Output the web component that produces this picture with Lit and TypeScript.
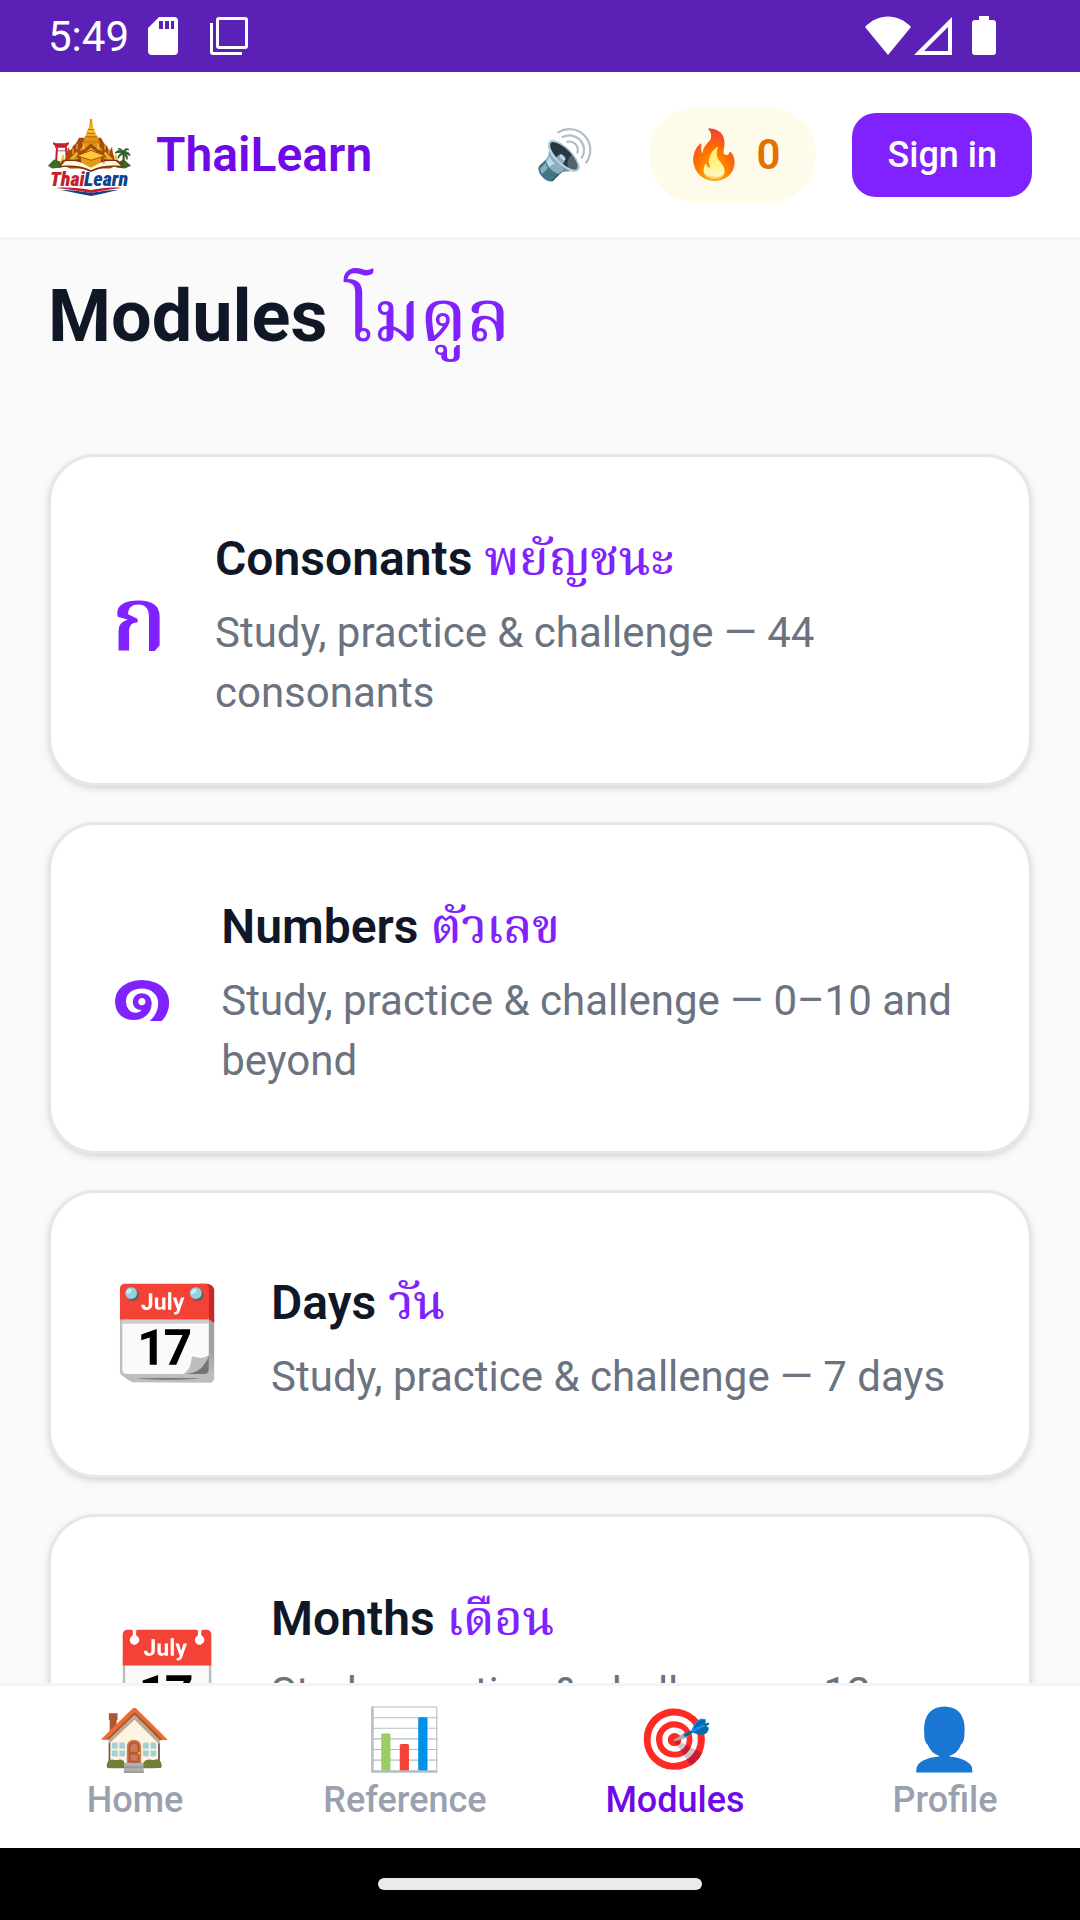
import { LitElement, html, css, svg, nothing } from "lit";
import { customElement } from "lit/decorators.js";
import { classMap } from "lit/directives/class-map.js";

interface Module {
  icon: string;
  digit?: boolean;
  title: string;
  thai: string;
  detail: string;
}

const MODULES: Module[] = [
  { icon: "ก", title: "Consonants", thai: "พยัญชนะ", detail: "Study, practice & challenge — 44 consonants" },
  { icon: "๑", digit: true, title: "Numbers", thai: "ตัวเลข", detail: "Study, practice & challenge — 0–10 and beyond" },
  { icon: "📆", title: "Days", thai: "วัน", detail: "Study, practice & challenge — 7 days" },
  { icon: "📅", title: "Months", thai: "เดือน", detail: "Study, practice & challenge — 12 months" },
];

const TABS = [
  { icon: "🏠", label: "Home" },
  { icon: "📊", label: "Reference" },
  { icon: "🎯", label: "Modules" },
  { icon: "👤", label: "Profile" },
];

const logo = svg`
  <svg class="logo" viewBox="0 0 84 84" role="img" aria-label="ThaiLearn logo">
    <defs>
      <linearGradient id="gold" x1="0" y1="0" x2="0" y2="1">
        <stop offset="0" stop-color="#d98a10" />
        <stop offset="0.5" stop-color="#ffc933" />
        <stop offset="1" stop-color="#d27a08" />
      </linearGradient>
    </defs>
    <g transform="translate(0 5) scale(1 0.9)">
      <path d="M5 27l3 1h9l4-1v2l-2 2v2H7v-2l-2-2z" fill="#c4202b" />
      <path d="M8 33h2l-1 17H7zM17 33h2l1 17h-2zM9 36h9v1H9z" fill="#c4202b" />
      <path d="M0 53l6-7 6 2 2 7-10 1zM83 53l-7-7-6 3-2 6 9 1z" fill="#3c6b25" />
      <path d="M73 51c2-5 2-8 1-13l2-1c1 5 1 9 0 14z" fill="#5e4a1e" />
      <path d="M75 38c-3-3-6-2-8 1 3-1 5-1 7 0-3 1-4 4-4 6 2-3 3-4 5-5 2 1 3 3 4 6 1-3 0-5-2-6 2 0 4 1 5 2 0-3-3-5-5-4 0-2 2-3 4-3-3-2-5 0-6 2-1-2-2-3-5-3 2 1 4 2 5 4z" fill="#28622c" stroke="#28622c" stroke-width="1" />
      <path d="M14 52c4-4 3-10 5-12l1-8 2 4 2-2 1-3 3-3 3-6h22l3 6 3 3 1 3 2 2 2-4 1 8c2 2 1 8 5 12l-8 4H22z" fill="#a84a0a" />
      <path d="M31 37l5-8 2-6h10l2 6 5 8-5-2-7-7-7 7z" fill="#e19a18" />
      <path d="M21 46l8-9 1 3-5 8zM65 46l-8-9-1 3 5 8zM33 42l10-9 10 9-4-1-6-5-6 5z" fill="#f0b12a" />
      <path d="M25 34v6M61 34v6M29 29v6M57 29v6M35 27l1 8M51 27l-1 8M30 44l-7 5M56 44l7 5" stroke="#ffd35a" stroke-width="1" />
      <path d="M42 1h2l1 9 2 4 1 4 2 3 1 5-3 2H38l-3-2 2-5 1-3 1-4 2-4z" fill="url(#gold)" />
      <path d="M40 13h6M39 17h8M37 21h12" stroke="#a95b08" stroke-width="1" />
      <path d="M12 50l3-10 3 10zM65 50l3-10 3 10z" fill="url(#gold)" />
      <path d="M10 55l5-8c10-2 20-1 28 6 8-7 18-8 27-6l6 8c-13-2-22 0-33 5-11-5-20-7-33-5z" fill="#7a3608" />
      <path d="M13 53l4-5c9-1 18 0 26 7 8-7 17-8 25-7l5 5c-12-1-21 0-30 5-9-5-18-6-30-5z" fill="#fff6df" />
      <path d="M33 43l10 3 10-3v6c-3 3-7 4-10 6-4-2-7-3-10-6z" fill="#e69a14" />
      <path d="M29 42l14-6 14 6-14 5z" fill="#ffc93c" stroke="#9c5209" stroke-width="1" />
      <path d="M55 43l1 8" stroke="#b56a0a" stroke-width="1" />
    </g>
    <text x="2" y="73" class="logo-text logo-red">Thai</text>
    <text x="36" y="73" class="logo-text logo-blue">Learn</text>
    <path d="M8 75c12-1 24 0 35 2 11-2 19-3 31-2-12 1-20 3-31 5-11-2-23-4-35-5z" fill="#c4202b" />
    <path d="M13 77c11 0 19 1 30 3 11-2 18-3 27-3-9 2-16 4-27 6-11-2-20-4-30-6z" fill="#123f86" />
  </svg>`;

@customElement("app-root")
export class AppRoot extends LitElement {
  static styles = css`
    :host {
      display: flex;
      flex-direction: column;
      height: 100vh;
      overflow: hidden;
      background: #fafafa;
      color: #101828;
      font-family: Roboto, "Noto Serif Thai", "Noto Color Emoji", sans-serif;
    }
    * { box-sizing: border-box; }
    a { color: inherit; text-decoration: none; }
    button { border: 0; font: inherit; cursor: pointer; }

    .status {
      display: flex;
      flex: none;
      align-items: center;
      height: 72px;
      padding: 0 78px 0 48px;
      background: #5b21b6;
      color: #fff;
      font-size: 42px;
    }
    .status svg { display: block; height: 40px; fill: currentColor; }
    .time { margin-right: 19px; }
    .sd { width: 30px; }
    .layers { width: 38px; margin-left: 32px; }
    .wifi { width: 46px; margin-left: auto; }
    .cell { width: 38px; margin-left: 3px; }
    .battery { width: 24px; margin: 0 6px 0 20px; }

    .header {
      display: flex;
      flex: none;
      align-items: center;
      gap: 36px;
      height: 168px;
      padding: 0 48px;
      background: #fff;
      border-bottom: 3px solid #f3f4f6;
    }
    .brand {
      display: flex;
      align-items: center;
      gap: 24px;
      margin-right: auto;
      color: #7008e7;
      font-size: 48px;
      font-weight: 600;
    }
    .logo { display: block; width: 84px; height: 84px; }
    .logo-text { font: italic 900 20px "Roboto Condensed", "Liberation Sans Narrow", "Noto Sans", sans-serif; }
    .logo-red { fill: #c4202b; }
    .logo-blue { fill: #0d4390; }
    .sound { padding: 0 18px; background: none; font-size: 48px; line-height: 60px; }
    .streak {
      display: flex;
      align-items: center;
      justify-content: center;
      gap: 12px;
      height: 96px;
      padding: 0 36px;
      border-radius: 48px;
      background: #fffbeb;
      color: #e17100;
      font-size: 42px;
      font-weight: 600;
    }
    .flame { font-size: 48px; line-height: 60px; }
    .signin {
      height: 84px;
      padding: 0 35px;
      border-radius: 24px;
      background: #7f22fe;
      color: #fff;
      font-size: 36px;
      font-weight: 500;
    }

    .content {
      flex: 1;
      min-height: 0;
      overflow: hidden;
      padding: 27px 48px 0;
    }
    h1 { margin: 0 0 87px; font-size: 72px; line-height: 100px; font-weight: 700; }
    .thai { color: #7f22fe; font-family: "Noto Serif Thai", serif; line-height: 1; }
    h1 .thai { font-weight: 500; }
    .list {
      display: flex;
      flex-direction: column;
      gap: 36px;
      margin: 0;
      padding: 0;
      list-style: none;
    }
    .card {
      display: flex;
      align-items: center;
      gap: 48px;
      padding: 60px;
      border: 3px solid #e5e7eb;
      border-radius: 48px;
      background: #fff;
      box-shadow: 0 3px 9px rgba(0, 0, 0, 0.1), 0 3px 6px -3px rgba(0, 0, 0, 0.1);
    }
    .icon {
      flex: none;
      padding-top: 12px;
      color: #7f22fe;
      font-family: "Noto Serif Thai", "Noto Color Emoji", serif;
      font-size: 90px;
      font-weight: 600;
      line-height: 150px;
    }
    .digit {
      padding: 0 0 12px;
      font-family: Sarabun, "Noto Serif Thai", serif;
      font-weight: 700;
    }
    h2 { margin: 0 0 2px; font-size: 48px; line-height: 84px; font-weight: 600; }
    h2 .thai { font-weight: 500; }
    .detail { margin: 0; color: #6b7280; font-size: 42px; line-height: 60px; }

    .tabs {
      display: grid;
      grid-template-columns: repeat(4, 1fr);
      flex: none;
      padding: 18px 0 24px;
      border-top: 3px solid #f3f4f6;
      background: #fff;
    }
    .tab {
      display: flex;
      flex-direction: column;
      align-items: center;
      color: #99a1af;
      font-size: 36px;
      font-weight: 500;
      line-height: 48px;
    }
    .tab[aria-current="page"] { color: #7008e7; }
    .tab-icon { font-size: 60px; line-height: 72px; }

    .gesture {
      display: flex;
      flex: none;
      align-items: center;
      justify-content: center;
      height: 72px;
      background: #000;
    }
    .handle { width: 30%; height: 12px; border-radius: 6px; background: #ebebeb; }
  `;

  render() {
    return html`
      <div class="status">
        <span class="time">5:49</span>
        <svg class="sd" viewBox="0 0 30 40" aria-hidden="true">
          <path fill-rule="evenodd" d="M11 1h15a4 4 0 0 1 4 4v30a4 4 0 0 1-4 4H4a4 4 0 0 1-4-4V12zM11 5v8h4V5zM17 5v8h4V5zM23 5v8h3V5z" />
        </svg>
        <svg class="layers" viewBox="0 0 38 40" aria-hidden="true">
          <path fill-rule="evenodd" d="M9 1h26a3 3 0 0 1 3 3v26a3 3 0 0 1-3 3H9a3 3 0 0 1-3-3V4a3 3 0 0 1 3-3zM9 4v26h26V4zM0 7h3v29h29v3H3a3 3 0 0 1-3-3z" />
        </svg>
        <svg class="wifi" viewBox="0 0 46 40" aria-hidden="true"><path d="M0 11C13-3 33-3 46 11L23 39z" /></svg>
        <svg class="cell" viewBox="0 0 38 40" aria-hidden="true">
          <path fill-rule="evenodd" d="M38 1v38H0zM34 11v24H10z" />
        </svg>
        <svg class="battery" viewBox="0 0 24 40" aria-hidden="true">
          <path d="M7 0h10v4h4a3 3 0 0 1 3 3v29a3 3 0 0 1-3 3H3a3 3 0 0 1-3-3V7a3 3 0 0 1 3-3h4z" />
        </svg>
      </div>

      <header class="header">
        <a class="brand" href="#home">${logo}<span>ThaiLearn</span></a>
        <button class="sound" aria-label="Sound">🔊</button>
        <div class="streak"><span class="flame">🔥</span><span>0</span></div>
        <button class="signin">Sign in</button>
      </header>

      <main class="content">
        <h1>Modules <span class="thai" lang="th">โมดูล</span></h1>
        <ul class="list">
          ${MODULES.map(
            (m) => html`
              <li>
                <a class="card" href="#${m.title.toLowerCase()}">
                  <span class=${classMap({ icon: true, digit: !!m.digit })}>${m.icon}</span>
                  <div>
                    <h2>${m.title} <span class="thai" lang="th">${m.thai}</span></h2>
                    <p class="detail">${m.detail}</p>
                  </div>
                </a>
              </li>
            `
          )}
        </ul>
      </main>

      <nav class="tabs" aria-label="Main">
        ${TABS.map(
          (t) => html`
            <a class="tab" href="#${t.label.toLowerCase()}" aria-current=${t.label === "Modules" ? "page" : nothing}>
              <span class="tab-icon">${t.icon}</span>
              <span>${t.label}</span>
            </a>
          `
        )}
      </nav>
      <div class="gesture"><div class="handle"></div></div>
    `;
  }
}
